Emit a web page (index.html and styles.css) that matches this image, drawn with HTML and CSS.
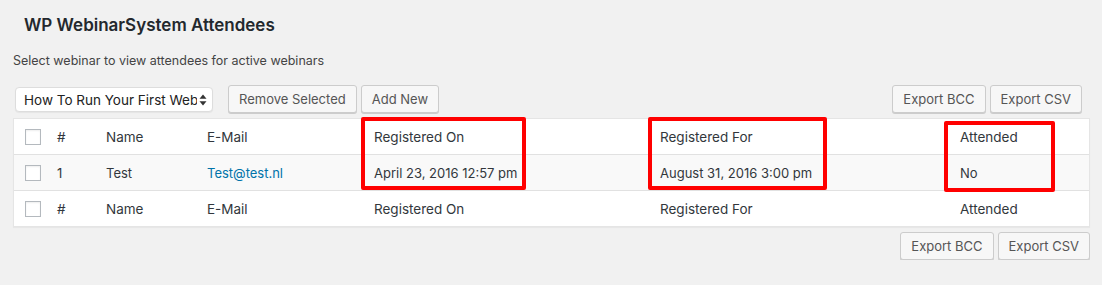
FILE: index.html
```html
<!DOCTYPE html>
<html lang="en">
<head>
    <meta charset="utf-8">
    <title>WP WebinarSystem Attendees</title>
    <link rel="stylesheet" href="styles.css">
</head>
<body>
    <div class="wrap">
        <h1>WP WebinarSystem Attendees</h1>
        <p class="intro">Select webinar to view attendees for active webinars</p>

        <div class="toolbar">
            <div class="left">
                <div class="select">
                    <span class="select-text">How To Run Your First Webinar</span>
                    <svg class="arrows" width="8" height="12" viewBox="0 0 8 12">
                        <path d="M4 0.5 L7.5 4.8 L0.5 4.8 Z" fill="#333"/>
                        <path d="M4 11.5 L7.5 7.2 L0.5 7.2 Z" fill="#333"/>
                    </svg>
                </div>
                <button class="btn remove">Remove Selected</button>
                <button class="btn">Add New</button>
            </div>
            <div class="right">
                <button class="btn">Export BCC</button>
                <button class="btn">Export CSV</button>
            </div>
        </div>

        <div class="table-box">
            <table>
                <colgroup>
                    <col class="c-cb">
                    <col class="c-id">
                    <col class="c-name">
                    <col class="c-mail">
                    <col class="c-on">
                    <col class="c-for">
                    <col class="c-att">
                </colgroup>
                <thead>
                    <tr>
                        <th><span class="cb"></span></th>
                        <th>#</th>
                        <th>Name</th>
                        <th>E-Mail</th>
                        <th>Registered On</th>
                        <th>Registered For</th>
                        <th>Attended</th>
                    </tr>
                </thead>
                <tbody>
                    <tr class="alt">
                        <td><span class="cb"></span></td>
                        <td>1</td>
                        <td>Test</td>
                        <td><a href="#">Test@test.nl</a></td>
                        <td>April 23, 2016 12:57 pm</td>
                        <td>August 31, 2016 3:00 pm</td>
                        <td>No</td>
                    </tr>
                </tbody>
                <tfoot>
                    <tr>
                        <th><span class="cb"></span></th>
                        <th>#</th>
                        <th>Name</th>
                        <th>E-Mail</th>
                        <th>Registered On</th>
                        <th>Registered For</th>
                        <th>Attended</th>
                    </tr>
                </tfoot>
            </table>

            <!-- red highlight boxes drawn over the table -->
            <div class="mark mark-on"></div>
            <div class="mark mark-for"></div>
            <div class="mark mark-att"></div>
        </div>

        <div class="bottom">
            <button class="btn">Export BCC</button>
            <button class="btn">Export CSV</button>
        </div>
    </div>
</body>
</html>
```

FILE: styles.css
```css
body {
    margin: 0;
    background-color: #f1f1f1;
    font-family: "Inter", "Liberation Sans", sans-serif;
    color: #32373c;
}

.wrap {
    padding: 0 12px 0 13px;
}

h1 {
    margin: 0;
    padding: 13px 0 0 11px;
    font-size: 17px;
    font-weight: 600;
    color: #23282d;
    line-height: 24px;
}

.intro {
    margin: 16px 0 0 0;
    font-size: 12.5px;
    line-height: 16px;
    color: #444;
}

.toolbar {
    display: flex;
    justify-content: space-between;
    align-items: center;
    margin-top: 16px;
}

.left,
.right,
.bottom {
    display: flex;
    align-items: center;
    gap: 4px;
}

.select {
    display: flex;
    align-items: center;
    width: 198px;
    height: 25px;
    margin: 1px 11px 0 2px;
    padding: 0 5px 0 8px;
    box-sizing: border-box;
    background-color: #fff;
    border: 1px solid #ddd;
    border-radius: 4px;
    box-shadow: 0 1px 1px rgba(0, 0, 0, 0.05);
    font-size: 13.5px;
    color: #222;
}

.select-text {
    flex: 1;
    overflow: hidden;
    white-space: nowrap;
}

.arrows {
    flex: none;
    margin-left: 2px;
}

.btn {
    height: 28px;
    padding: 0 10px;
    background-color: #f7f7f7;
    border: 1px solid #ccc;
    border-radius: 3px;
    box-shadow: 0 1px 0 #ccc;
    font-family: inherit;
    font-size: 13px;
    color: #555;
}

.right {
    margin-right: 8px;
}

.table-box {
    position: relative;
    margin-top: 5px;
    background-color: #fff;
    border: 1px solid #e5e5e5;
    box-shadow: 0 1px 1px rgba(0, 0, 0, 0.04);
}

table {
    width: 100%;
    border-collapse: collapse;
    table-layout: fixed;
}

.c-cb { width: 33px; }
.c-id { width: 49px; }
.c-name { width: 101px; }
.c-mail { width: 167px; }
.c-on { width: 286px; }
.c-for { width: 300px; }

th,
td {
    height: 35px;
    padding: 0 0 0 10px;
    text-align: left;
    font-weight: 400;
    font-size: 13.5px;
    color: #32373c;
    vertical-align: middle;
    white-space: nowrap;
}

td {
    font-size: 13px;
}

thead tr {
    border-bottom: 1px solid #e1e1e1;
}

tfoot tr {
    border-top: 1px solid #e1e1e1;
}

.alt {
    background-color: #f9f9f9;
}

th:first-child,
td:first-child {
    padding-left: 11px;
}

.cb {
    display: block;
    width: 14px;
    height: 14px;
    border: 1px solid #b4b9be;
    background-color: #fff;
    box-shadow: inset 0 1px 2px rgba(0, 0, 0, 0.07);
}

a {
    color: #0073aa;
    text-decoration: none;
}

.mark {
    position: absolute;
    border: 4px solid #ff0000;
    border-radius: 2px;
}

.mark-on {
    left: 347px;
    top: -2px;
    width: 157px;
    height: 65px;
}

.mark-for {
    left: 634px;
    top: -2px;
    width: 171px;
    height: 65px;
}

.mark-att {
    left: 930px;
    top: 2px;
    width: 103px;
    height: 63px;
}

.bottom {
    justify-content: flex-end;
    margin-top: 5px;
}
```
